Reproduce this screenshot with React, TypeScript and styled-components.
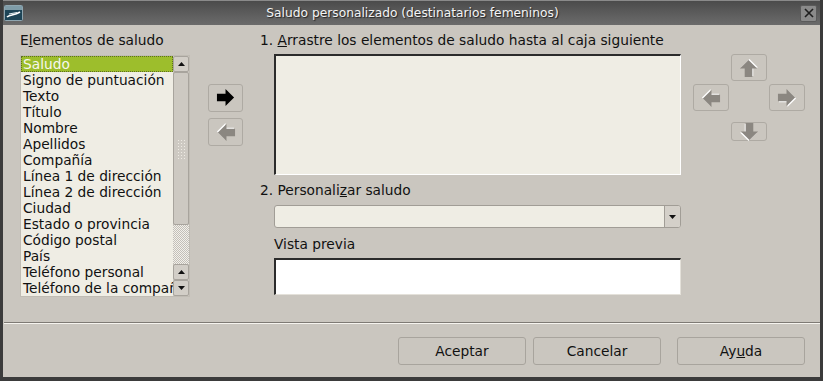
import React from 'react';
import styled, { createGlobalStyle } from 'styled-components';

const GlobalStyle = createGlobalStyle`
  html, body {
    margin: 0;
    padding: 0;
    background: #3b3b3b;
  }
  body {
    font-family: 'DejaVu Sans', 'Liberation Sans', sans-serif;
    font-size: 13.75px;
    color: #111;
  }
`;

const items = [
  'Saludo',
  'Signo de puntuación',
  'Texto',
  'Título',
  'Nombre',
  'Apellidos',
  'Compañía',
  'Línea 1 de dirección',
  'Línea 2 de dirección',
  'Ciudad',
  'Estado o provincia',
  'Código postal',
  'País',
  'Teléfono personal',
  'Teléfono de la compañía',
];

type Dir = 'right' | 'left' | 'up' | 'down';

const rotation: Record<Dir, number> = { right: 0, down: 90, left: 180, up: 270 };

function Arrow({ dir, color, emboss }: { dir: Dir; color: string; emboss?: boolean }) {
  const d = 'M1 6 H10 V1 L19 10 L10 19 V14 H1 Z';
  return (
    <svg width="20" height="20" viewBox="0 0 21 21">
      <g transform={`rotate(${rotation[dir]} 10.5 10.5)`}>
        {emboss && <path d={d} fill="#ffffff" transform="translate(1 1)" />}
        <path d={d} fill={color} />
      </g>
    </svg>
  );
}

function Tri({ up }: { up?: boolean }) {
  return (
    <svg width="7" height="4" viewBox="0 0 7 4">
      <path d={up ? 'M0 4 L3.5 0 L7 4 Z' : 'M0 0 L3.5 4 L7 0 Z'} fill="#111" />
    </svg>
  );
}

function App() {
  return (
    <>
      <GlobalStyle />
      <Window>
        <TitleBar>
          <AppIcon>
            <svg width="19" height="16" viewBox="0 0 19 16">
              <rect x="0.5" y="0.5" width="18" height="15" rx="1" fill="#1d4456" stroke="#8fa6b0" />
              <rect x="1" y="1" width="17" height="4" fill="#7f9ca8" />
              <path d="M3 12 C6 9, 10 11, 16 7" stroke="#ffffff" strokeWidth="1.6" fill="none" />
              <path d="M5 9 L13 7.5" stroke="#e2ecef" strokeWidth="1.2" fill="none" />
            </svg>
          </AppIcon>
          <Title>Saludo personalizado (destinatarios femeninos)</Title>
          <CloseButton>
            <svg width="10" height="10" viewBox="0 0 10 10">
              <path d="M1 1 L9 9 M9 1 L1 9" stroke="#1e1e1e" strokeWidth="1.6" />
            </svg>
          </CloseButton>
        </TitleBar>

        <Body>
          <LeftColumn>
            <Label>
              E<u>l</u>ementos de saludo
            </Label>
            <ListBox>
              <ListItems>
                {items.map((it, i) => (
                  <ListItem key={it} selected={i === 0}>
                    {it}
                  </ListItem>
                ))}
              </ListItems>
              <ScrollBar>
                <ScrollButton>
                  <Tri up />
                </ScrollButton>
                <Thumb>
                  <Grip />
                </Thumb>
                <Trough />
                <ScrollButton>
                  <Tri up />
                </ScrollButton>
                <ScrollButton>
                  <Tri />
                </ScrollButton>
              </ScrollBar>
            </ListBox>
          </LeftColumn>

          <MoveColumn>
            <ToolButton>
              <Arrow dir="right" color="#000" />
            </ToolButton>
            <ToolButton>
              <Arrow dir="left" color="#8b8781" emboss />
            </ToolButton>
          </MoveColumn>

          <RightColumn>
            <Label>
              1. <u>A</u>rrastre los elementos de saludo hasta al caja siguiente
            </Label>
            <Indented>
              <DropBox />
            </Indented>
            <StepLabel>
              2. Personali<u>z</u>ar saludo
            </StepLabel>
            <Indented>
              <Combo>
                <ComboField />
                <ComboButton>
                  <Tri />
                </ComboButton>
              </Combo>
              <SubLabel>Vista previa</SubLabel>
              <Preview />
            </Indented>
          </RightColumn>

          <NavPad>
            <NavButton area="up">
              <Arrow dir="up" color="#8b8781" emboss />
            </NavButton>
            <NavButton area="left">
              <Arrow dir="left" color="#8b8781" emboss />
            </NavButton>
            <NavButton area="right">
              <Arrow dir="right" color="#8b8781" emboss />
            </NavButton>
            <NavButton area="down">
              <Arrow dir="down" color="#8b8781" emboss />
            </NavButton>
          </NavPad>
        </Body>

        <Separator />

        <Footer>
          <DialogButton>Aceptar</DialogButton>
          <DialogButton>Cancelar</DialogButton>
          <HelpButton>
            Ay<u>u</u>da
          </HelpButton>
        </Footer>
      </Window>
    </>
  );
}

export default App;

const Window = styled.div`
  width: 823px;
  height: 381px;
  box-sizing: border-box;
  display: flex;
  flex-direction: column;
  background: #cac6bf;
  border-left: 3px solid #3b3b3b;
  border-right: 3px solid #3b3b3b;
  border-bottom: 4px solid #3b3b3b;
  overflow: hidden;
`;

const TitleBar = styled.div`
  height: 25px;
  flex-shrink: 0;
  margin: 0 -3px;
  display: flex;
  align-items: center;
  padding: 0 6px 0 3px;
  box-sizing: border-box;
  border-top: 1px solid #8a8a8a;
  background: linear-gradient(#4b4b4b, #5f5f5f 60%, #6b6b6b);
`;

const AppIcon = styled.div`
  width: 20px;
  height: 18px;
  display: flex;
  align-items: center;
  justify-content: center;
`;

const Title = styled.div`
  flex: 1;
  text-align: center;
  color: #f4f4f4;
  font-size: 12.25px;
  text-shadow: 1px 1px 1px #222;
  padding-left: 2px;
`;

const CloseButton = styled.div`
  width: 17px;
  height: 17px;
  border-radius: 2px;
  background: #8a8a8a;
  border: 1px solid #5a5a5a;
  box-sizing: border-box;
  display: flex;
  align-items: center;
  justify-content: center;
`;

const Body = styled.div`
  flex: 1;
  display: flex;
  align-items: flex-start;
  padding: 7px 0 0 17px;
`;

const LeftColumn = styled.div`
  width: 170px;
  display: flex;
  flex-direction: column;
`;

const Label = styled.div`
  height: 16px;
  line-height: 16px;
  white-space: nowrap;
  margin-bottom: 7px;
`;

const ListBox = styled.div`
  display: flex;
  height: 242px;
  box-sizing: border-box;
  border: 1px solid #c0bcb4;
  background: #efede4;
`;

const ListItems = styled.div`
  flex: 1;
  min-width: 0;
  overflow: hidden;
  display: flex;
  flex-direction: column;
`;

const ListItem = styled.div<{ selected?: boolean }>`
  height: 16px;
  line-height: 16px;
  flex-shrink: 0;
  padding-left: 2px;
  white-space: nowrap;
  overflow: hidden;
  box-sizing: border-box;
  background: ${(p) => (p.selected ? '#9dbe2c' : 'transparent')};
  color: ${(p) => (p.selected ? '#f7f7ee' : '#111')};
  outline: ${(p) => (p.selected ? '1px dotted #5d6e20' : 'none')};
  outline-offset: -1px;
`;

const ScrollBar = styled.div`
  width: 16px;
  flex-shrink: 0;
  display: flex;
  flex-direction: column;
  background: #cac6bf;
`;

const ScrollButton = styled.div`
  height: 16px;
  flex-shrink: 0;
  box-sizing: border-box;
  border: 1px solid #a8a49d;
  border-radius: 2px;
  background: #d2cec7;
  display: flex;
  align-items: center;
  justify-content: center;
`;

const Thumb = styled.div`
  height: 153px;
  flex-shrink: 0;
  box-sizing: border-box;
  border: 1px solid #a8a49d;
  border-radius: 2px;
  background: #cdc9c2;
  display: flex;
  align-items: center;
  justify-content: center;
`;

const Grip = styled.div`
  width: 9px;
  height: 20px;
  background-image: radial-gradient(#eeebe4 0.8px, transparent 1px);
  background-size: 3px 3px;
`;

const Trough = styled.div`
  flex: 1;
  background-color: #dcd9d3;
  background-image: repeating-conic-gradient(#f2f0ea 0% 25%, #c3bfb8 0% 50%);
  background-size: 2px 2px;
`;

const MoveColumn = styled.div`
  display: flex;
  flex-direction: column;
  gap: 6px;
  margin: 52px 0 0 18px;
`;

const ToolButton = styled.div`
  width: 35px;
  height: 28px;
  box-sizing: border-box;
  border: 1px solid #aeaaa3;
  border-radius: 3px;
  display: flex;
  align-items: center;
  justify-content: center;
`;

const RightColumn = styled.div`
  margin-left: 17px;
  display: flex;
  flex-direction: column;
`;

const Indented = styled.div`
  padding-left: 14px;
  display: flex;
  flex-direction: column;
`;

const DropBox = styled.div`
  width: 407px;
  height: 121px;
  margin-top: -1px;
  box-sizing: border-box;
  background: #efede4;
  border-top: 2px solid #2b2b2b;
  border-left: 2px solid #2b2b2b;
  border-right: 1px solid #ffffff;
  border-bottom: 1px solid #ffffff;
`;

const StepLabel = styled.div`
  height: 16px;
  line-height: 16px;
  margin: 7px 0 7px;
`;

const Combo = styled.div`
  width: 407px;
  height: 23px;
  display: flex;
  box-sizing: border-box;
  border: 1px solid #a19d96;
  border-radius: 3px;
  background: #efede4;
  overflow: hidden;
`;

const ComboField = styled.div`
  flex: 1;
`;

const ComboButton = styled.div`
  width: 15px;
  border-left: 1px solid #a19d96;
  background: #d4d0c9;
  display: flex;
  align-items: center;
  justify-content: center;
`;

const SubLabel = styled.div`
  height: 16px;
  line-height: 16px;
  margin: 8px 0 6px;
`;

const Preview = styled.div`
  width: 407px;
  height: 37px;
  box-sizing: border-box;
  background: #ffffff;
  border-top: 2px solid #2b2b2b;
  border-left: 2px solid #2b2b2b;
  border-right: 1px solid #e4e1da;
  border-bottom: 1px solid #e4e1da;
`;

const NavPad = styled.div`
  margin: 22px 0 0 12px;
  display: grid;
  grid-template-columns: 36px 36px 36px;
  grid-template-rows: 27px 27px 27px;
  grid-template-areas:
    '. up .'
    'left . right'
    '. down .';
  column-gap: 2px;
  row-gap: 3px;
`;

const NavButton = styled.div<{ area: string }>`
  grid-area: ${(p) => p.area};
  margin-top: ${(p) => (p.area === 'down' ? '8px' : '0')};
  box-sizing: border-box;
  border: 1px solid #aeaaa3;
  border-radius: 3px;
  display: flex;
  align-items: center;
  justify-content: center;
`;

const Separator = styled.div`
  height: 0;
  border-top: 1px solid #7e7a74;
  border-bottom: 1px solid #f6f4ef;
  margin-left: 1px;
`;

const Footer = styled.div`
  height: 53px;
  display: flex;
  align-items: flex-start;
  justify-content: flex-end;
  padding: 13px 15px 0 0;
  box-sizing: border-box;
  gap: 7px;
`;

const DialogButton = styled.div`
  width: 128px;
  height: 28px;
  box-sizing: border-box;
  border: 1px solid #a8a49d;
  border-radius: 3px;
  display: flex;
  align-items: center;
  justify-content: center;
`;

const HelpButton = styled(DialogButton)`
  margin-left: 9px;
`;
